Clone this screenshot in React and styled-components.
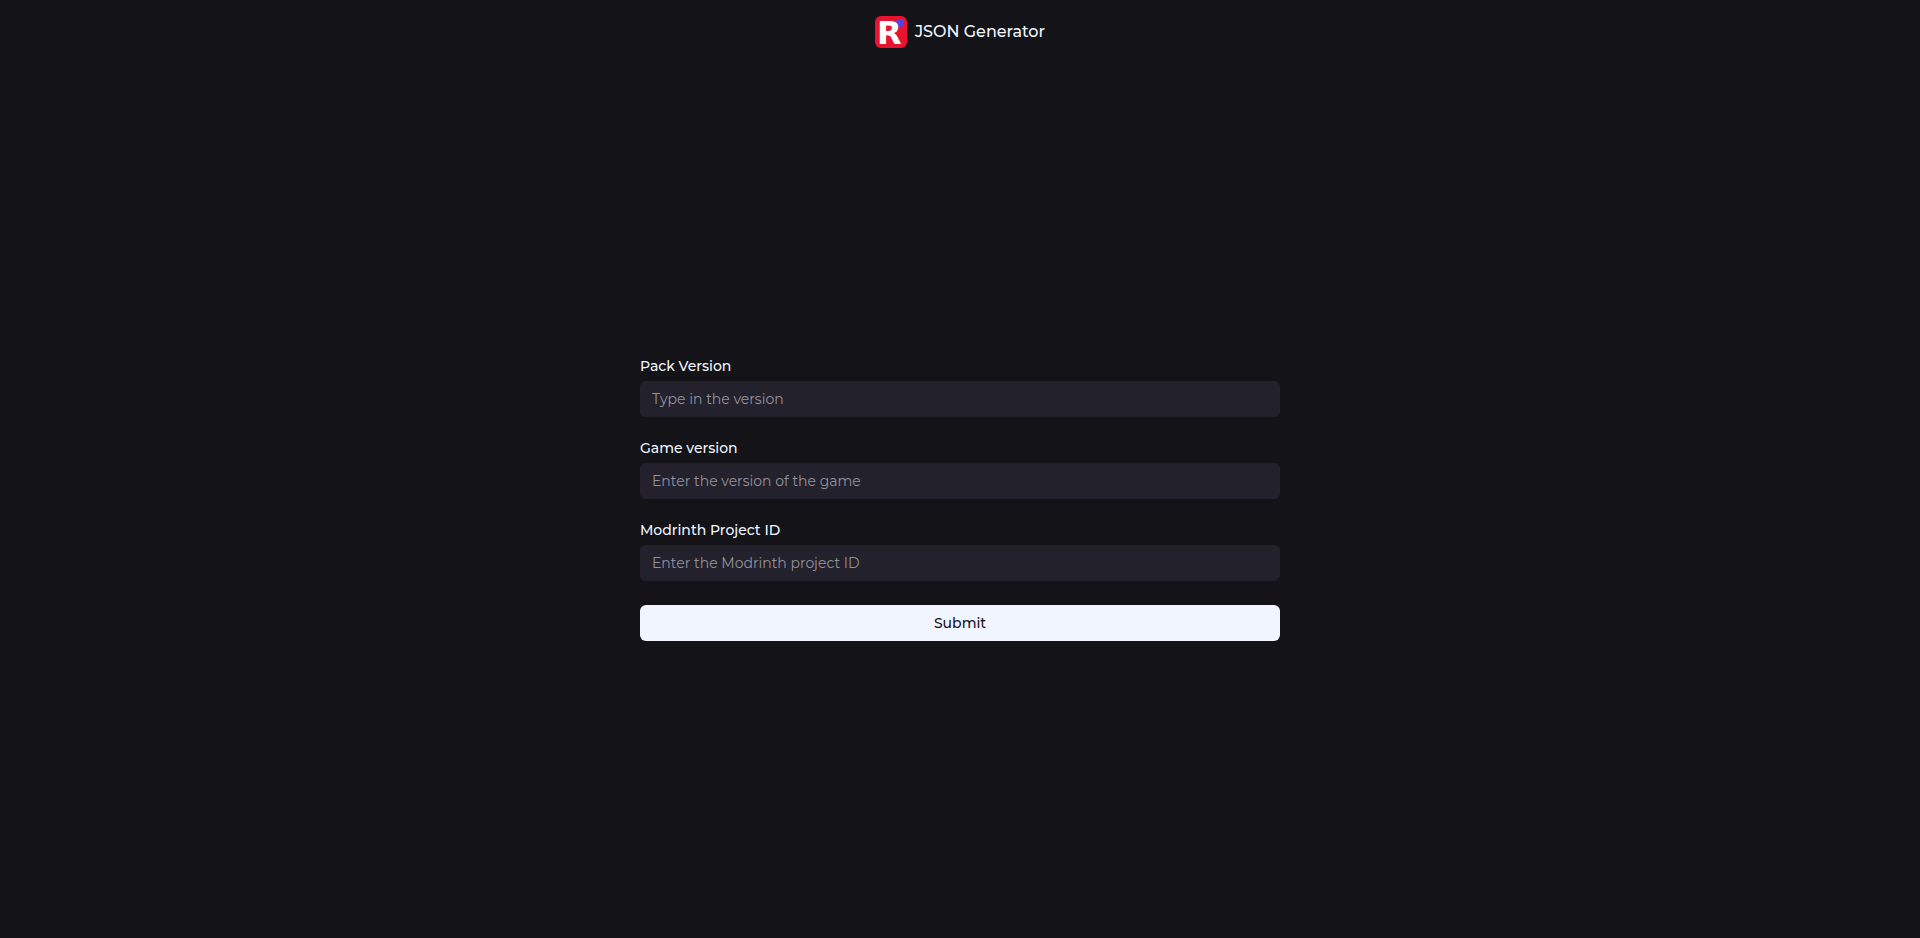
import React from 'react';
import styled, { createGlobalStyle } from 'styled-components';

const fields = [
  { id: 'packVersion', label: 'Pack Version', placeholder: 'Type in the version' },
  { id: 'gameVersion', label: 'Game version', placeholder: 'Enter the version of the game' },
  { id: 'projectId', label: 'Modrinth Project ID', placeholder: 'Enter the Modrinth project ID' },
];

const App = () => {
  const handleSubmit = (event) => {
    event.preventDefault();
  };

  return (
    <Page>
      <GlobalStyle />
      <Header>
        <Logo viewBox="0 0 32 32" aria-hidden="true">
          <rect width="32" height="32" rx="6" fill="#e8142f" />
          <circle cx="25" cy="7" r="4" fill="#4f46e0" />
          <LogoLetter x="2" y="28">R</LogoLetter>
        </Logo>
        <Title>JSON Generator</Title>
      </Header>
      <Main>
        <Form onSubmit={handleSubmit}>
          {fields.map((field) => (
            <Field key={field.id}>
              <Label htmlFor={field.id}>{field.label}</Label>
              <Input id={field.id} name={field.id} type="text" placeholder={field.placeholder} />
            </Field>
          ))}
          <SubmitButton type="submit">Submit</SubmitButton>
        </Form>
      </Main>
    </Page>
  );
};

const GlobalStyle = createGlobalStyle`
  *,
  *::before,
  *::after {
    box-sizing: border-box;
  }

  body {
    margin: 0;
    background: #141318;
    color: #f0f5ff;
    font-family: Montserrat, Inter, sans-serif;
  }
`;

const Page = styled.div`
  display: flex;
  flex-direction: column;
  min-height: 100vh;
`;

const Header = styled.header`
  display: flex;
  align-items: center;
  justify-content: center;
  gap: 8px;
  padding: 16px;
`;

const Logo = styled.svg`
  width: 32px;
  height: 32px;
  overflow: visible;
`;

const LogoLetter = styled.text`
  fill: #fff;
  font-family: 'DejaVu Sans', sans-serif;
  font-size: 32px;
  font-weight: 700;
`;

const Title = styled.h1`
  margin: 0;
  font-size: 16px;
  font-weight: 500;
  line-height: 26px;
`;

const Main = styled.main`
  display: flex;
  flex: 1;
  align-items: center;
  justify-content: center;
  padding: 0 16px 2px;
`;

const Form = styled.form`
  display: flex;
  flex-direction: column;
  gap: 24px;
  width: 100%;
  max-width: 640px;
`;

const Field = styled.div`
  display: flex;
  flex-direction: column;
  gap: 8px;
`;

const Label = styled.label`
  font-size: 14px;
  font-weight: 500;
  line-height: 14px;
`;

const Input = styled.input`
  width: 100%;
  height: 36px;
  padding: 0 12px;
  border: 0;
  border-radius: 6px;
  background: #23212c;
  color: #f0f5ff;
  font-family: inherit;
  font-size: 14px;

  &::placeholder {
    color: #93929c;
    opacity: 1;
  }

  &:focus-visible {
    outline: 1px solid #f0f5ff;
  }
`;

const SubmitButton = styled.button`
  height: 36px;
  padding: 0 16px;
  border: 0;
  border-radius: 6px;
  background: #f0f5ff;
  color: #141318;
  font-family: inherit;
  font-size: 14px;
  font-weight: 500;
  cursor: pointer;

  &:hover {
    background: #dde4f2;
  }
`;

export default App;
